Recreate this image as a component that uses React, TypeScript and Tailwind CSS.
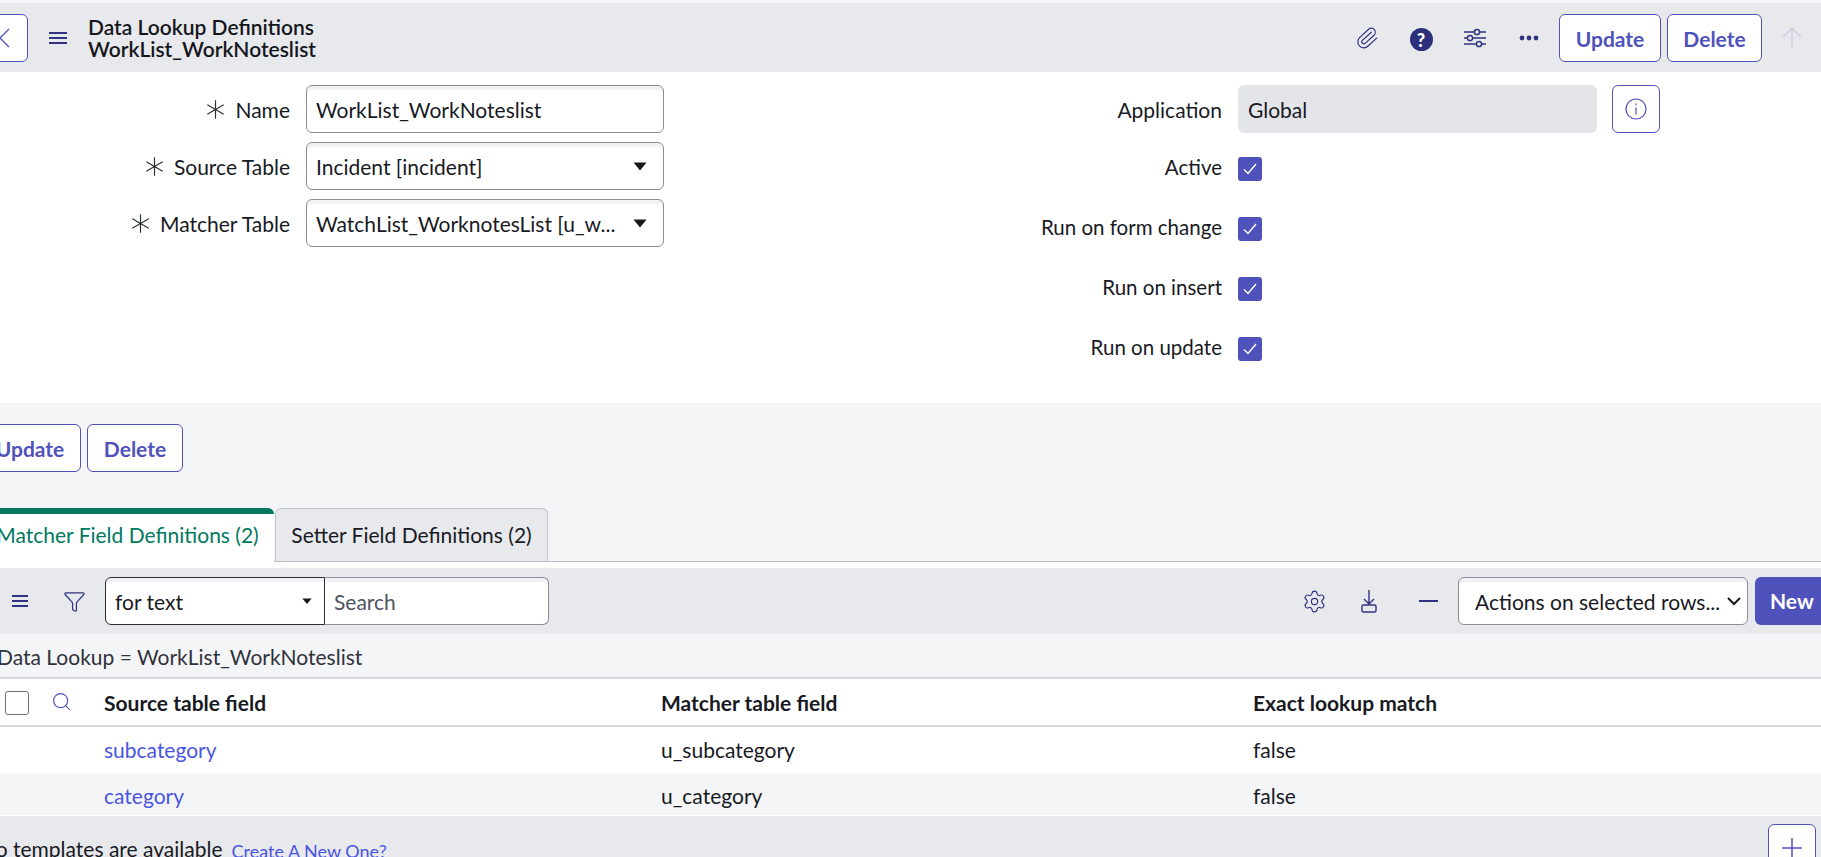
import { Filter, Paperclip, Search, Settings } from "lucide-react";
import type { ReactNode } from "react";

const navy = "#2f3380";

function Hamburger({ width = 18 }: { width?: number }) {
  return (
    <svg width={width} height="14" viewBox="0 0 18 14" fill="none" stroke={navy} strokeWidth="2" preserveAspectRatio="none" className="shrink-0">
      <path d="M0 2h18M0 7h18M0 12h18" />
    </svg>
  );
}

function Caret({ size = 14 }: { size?: number }) {
  return (
    <svg width={size} height={size * 0.65} viewBox="0 0 14 9" fill="#16181d" className="shrink-0">
      <path d="M0.5 0.5h13L7 8.5z" />
    </svg>
  );
}

function Required() {
  return (
    <svg width="21" height="21" viewBox="0 0 18 18" fill="none" stroke="#2a2f33" strokeWidth="1" className="mr-[9px] shrink-0">
      <path d="M9 1v16M2 5l14 8M16 5L2 13" />
    </svg>
  );
}

function Check() {
  return (
    <span className="flex h-[24px] w-[24px] items-center justify-center rounded-[3px] bg-[#5052bb]">
      <svg width="14" height="12" viewBox="0 0 14 12" fill="none" stroke="#fff" strokeWidth="1.4">
        <path d="M1 6.5l4 4L13 1" />
      </svg>
    </span>
  );
}

function OutlineButton({ children, className = "" }: { children: ReactNode; className?: string }) {
  return (
    <button className={`flex h-[48px] shrink-0 items-center justify-center rounded-[6px] border border-[#5052bb] bg-white text-[21px] font-bold text-[#5052bb] ${className}`}>
      {children}
    </button>
  );
}

function IconSlot({ children }: { children: ReactNode }) {
  return <span className="flex h-[48px] w-[48px] items-center justify-center">{children}</span>;
}

function LeftField({ label, children }: { label: string; children: ReactNode }) {
  return (
    <div className="flex h-[48px] items-center">
      <div className="flex w-[290px] items-center justify-end">
        <Required />
        <span className="pt-[2px]">{label}</span>
      </div>
      <div className="ml-[16px] flex h-[48px] w-[358px] items-center justify-between rounded-[6px] border border-[#8b8e99] bg-white pl-[9px] pr-[16px] pt-[1px] shadow-[inset_0_4px_0_#f1f2f4]">
        {children}
      </div>
    </div>
  );
}

function CheckRow({ label }: { label: string }) {
  return (
    <div className="flex h-[48px] items-center">
      <div className="w-[322px] pb-[5px] text-right text-[20.5px]">{label}</div>
      <div className="ml-[16px]">
        <Check />
      </div>
    </div>
  );
}

const rows = [
  { source: "subcategory", matcher: "u_subcategory", exact: "false", tone: "h-[46px] bg-white" },
  { source: "category", matcher: "u_category", exact: "false", tone: "h-[42px] bg-[#f4f5f7] pt-[3px]" },
];

export default function App() {
  return (
    <div className="h-[857px] w-[1821px] overflow-hidden bg-[#f4f5f7] text-[21px] leading-[24px] text-[#181a1f] [font-family:Lato,sans-serif]">
      <div className="h-[3px] bg-[#f4f5f7]" />

      {/* form header */}
      <div className="flex h-[69px] items-center bg-[#e8e9ed] pr-[5px]">
        <button className="ml-[-20px] flex h-[48px] w-[48px] shrink-0 items-center justify-center rounded-[6px] border border-[#5052bb] bg-white">
          <svg width="12" height="20" viewBox="0 0 12 20" fill="none" stroke="#5052bb" strokeWidth="1.3">
            <path d="M11 1L2 10l9 9" />
          </svg>
        </button>
        <span className="ml-[21px]">
          <Hamburger />
        </span>
        <div className="ml-[21px] text-[21px] font-semibold leading-[22px] text-[#15171c]">
          <div>Data Lookup Definitions</div>
          <div>WorkList_WorkNoteslist</div>
        </div>
        <div className="ml-auto flex items-center gap-[6px]">
          <IconSlot>
            <Paperclip size={24} strokeWidth={1.2} color={navy} className="rotate-[3deg]" />
          </IconSlot>
          <IconSlot>
            <span className="mt-[4px] flex h-[23px] w-[23px] items-center justify-center rounded-full bg-[#2c2f7c] text-[18px] font-black leading-none text-white">?</span>
          </IconSlot>
          <IconSlot>
            <svg width="22" height="20" viewBox="0 0 22 20" fill="none" stroke={navy} strokeWidth="1.5">
              <path d="M0 4h10M16 4h6M0 10h3M9 10h13M0 16h12M18 16h4" />
              <circle cx="13" cy="4" r="2.6" />
              <circle cx="6" cy="10" r="2.6" />
              <circle cx="15" cy="16" r="2.6" />
            </svg>
          </IconSlot>
          <IconSlot>
            <svg width="20" height="6" viewBox="0 0 20 6" fill={navy}>
              <circle cx="3" cy="3" r="2.4" />
              <circle cx="10" cy="3" r="2.4" />
              <circle cx="17" cy="3" r="2.4" />
            </svg>
          </IconSlot>
          <OutlineButton className="w-[102px] pt-[2px]">Update</OutlineButton>
          <OutlineButton className="w-[95px] pt-[2px]">Delete</OutlineButton>
          <IconSlot>
            <svg width="20" height="22" viewBox="0 0 20 22" fill="none" stroke="#d0d1de" strokeWidth="1.6">
              <path d="M10 22V2M1 10l9-9 9 9" />
            </svg>
          </IconSlot>
        </div>
      </div>

      {/* form body */}
      <div className="flex h-[331px] bg-white pt-[13px]">
        <div className="flex w-[900px] shrink-0 flex-col gap-[9px]">
          <LeftField label="Name">WorkList_WorkNoteslist</LeftField>
          <LeftField label="Source Table">
            Incident [incident]
            <Caret />
          </LeftField>
          <LeftField label="Matcher Table">
            WatchList_WorknotesList [u_w...
            <Caret />
          </LeftField>
        </div>
        <div className="flex flex-col gap-[12px]">
          <div className="flex h-[48px] items-center">
            <div className="w-[322px] pt-[1px] text-right">Application</div>
            <div className="ml-[16px] flex h-[48px] w-[359px] items-center rounded-[6px] bg-[#e4e5e9] pl-[10px] pt-[1px]">Global</div>
            <OutlineButton className="ml-[15px] w-[48px]">
              <svg width="22" height="22" viewBox="0 0 22 22" fill="none" stroke="#5052bb" strokeWidth="1.2">
                <circle cx="11" cy="11" r="10" />
                <path d="M11 9.5v7M11 5.5v1.8" />
              </svg>
            </OutlineButton>
          </div>
          <CheckRow label="Active" />
          <CheckRow label="Run on form change" />
          <CheckRow label="Run on insert" />
          <CheckRow label="Run on update" />
        </div>
      </div>

      {/* bottom actions */}
      <div className="flex h-[105px] gap-[6px] pt-[21px]">
        <OutlineButton className="ml-[-21px] w-[102px] pt-[2px]">Update</OutlineButton>
        <OutlineButton className="w-[96px] pt-[2px]">Delete</OutlineButton>
      </div>

      {/* related list tabs */}
      <div className="flex h-[54px] border-b border-[#b9bbc6]">
        <div className="ml-[-19px] mb-[-1px] flex h-[54px] w-[293px] shrink-0 items-center justify-center rounded-t-[6px] border-t-[6px] border-[#00795f] bg-white pb-[6px] text-[#00795f]">
          Matcher Field Definitions (2)
        </div>
        <div className="ml-px flex h-[53px] w-[273px] shrink-0 items-center justify-center rounded-t-[6px] border border-b-0 border-[#c4c6cf] bg-[#e8e9ed]">
          Setter Field Definitions (2)
        </div>
      </div>
      <div className="h-[6px] bg-white" />

      {/* list toolbar */}
      <div className="flex h-[66px] items-center bg-[#e8e9ed]">
        <span className="ml-[12px] shrink-0">
          <Hamburger width={16} />
        </span>
        <Filter size={23} strokeWidth={1.3} color={navy} className="ml-[35px] shrink-0" />
        <div className="ml-[19px] flex h-[48px] w-[220px] shrink-0 items-center justify-between rounded-l-[6px] border border-[#2b2e36] bg-white pl-[9px] pr-[12px] pt-[1px] shadow-[inset_0_4px_0_#f1f2f4]">
          for text
          <Caret size={10} />
        </div>
        <div className="flex h-[48px] w-[224px] shrink-0 items-center rounded-r-[6px] border border-l-0 border-[#8b8e99] bg-white pl-[9px] pt-[1px] text-[#50535f] shadow-[inset_0_4px_0_#f1f2f4]">
          Search
        </div>
        <Settings size={25} strokeWidth={1.1} color={navy} className="ml-[753px] shrink-0" />
        <svg width="16" height="24" viewBox="0 0 16 24" fill="none" stroke={navy} strokeWidth="1.4" className="ml-[34px] shrink-0">
          <path d="M8 1v14M3 10l5 5 5-5" />
          <rect x="1" y="16" width="14" height="7" rx="1.5" />
        </svg>
        <span className="ml-[42px] h-[2px] w-[19px] shrink-0 bg-[#2f3380]" />
        <div className="ml-[20px] flex h-[48px] w-[290px] shrink-0 items-center justify-between rounded-[6px] border border-[#8b8e99] bg-white pl-[16px] pr-[6px] pt-[1px] shadow-[inset_0_4px_0_#f1f2f4]">
          Actions on selected rows...
          <svg width="14" height="9" viewBox="0 0 14 9" fill="none" stroke="#16181d" strokeWidth="2">
            <path d="M1 1l6 6 6-6" />
          </svg>
        </div>
        <button className="ml-[7px] flex h-[48px] w-[80px] shrink-0 items-center rounded-[6px] bg-[#5052bb] pl-[15px] font-bold text-white">New</button>
      </div>

      <div className="flex h-[43px] items-center pt-[2px]">
        <span className="ml-[-3px] text-[#2f323a]">Data Lookup = WorkList_WorkNoteslist</span>
      </div>

      {/* table */}
      <div className="grid h-[50px] grid-cols-[104px_557px_592px_1fr] items-center border-y-2 border-[#d6d8df] bg-white pt-[1px] font-bold">
        <div className="flex items-center">
          <span className="ml-[5px] h-[24px] w-[24px] rounded-[3px] border border-[#6d707c] bg-white" />
          <Search size={21} strokeWidth={1.3} color="#5052bb" className="ml-[22px] mb-[2px]" />
        </div>
        <div>Source table field</div>
        <div>Matcher table field</div>
        <div>Exact lookup match</div>
      </div>
      {rows.map((row) => (
        <div key={row.source} className={`grid grid-cols-[104px_557px_592px_1fr] items-center ${row.tone}`}>
          <div />
          <div className="text-[#4a55e0]">{row.source}</div>
          <div>{row.matcher}</div>
          <div>{row.exact}</div>
        </div>
      ))}
      <div className="h-px bg-white" />

      {/* templates bar */}
      <div className="flex h-[60px] items-start bg-[#e8e9ed]">
        <span className="ml-[-20px] mt-[21px] whitespace-nowrap">No templates are available</span>
        <span className="ml-[9px] mt-[23px] whitespace-nowrap text-[18px] text-[#4a55e0]">Create A New One?</span>
        <OutlineButton className="ml-auto mr-[5px] mt-[8px] w-[48px]">
          <svg width="20" height="20" viewBox="0 0 20 20" fill="none" stroke="#5052bb" strokeWidth="1.5">
            <path d="M10 0v20M0 10h20" />
          </svg>
        </OutlineButton>
      </div>
    </div>
  );
}
